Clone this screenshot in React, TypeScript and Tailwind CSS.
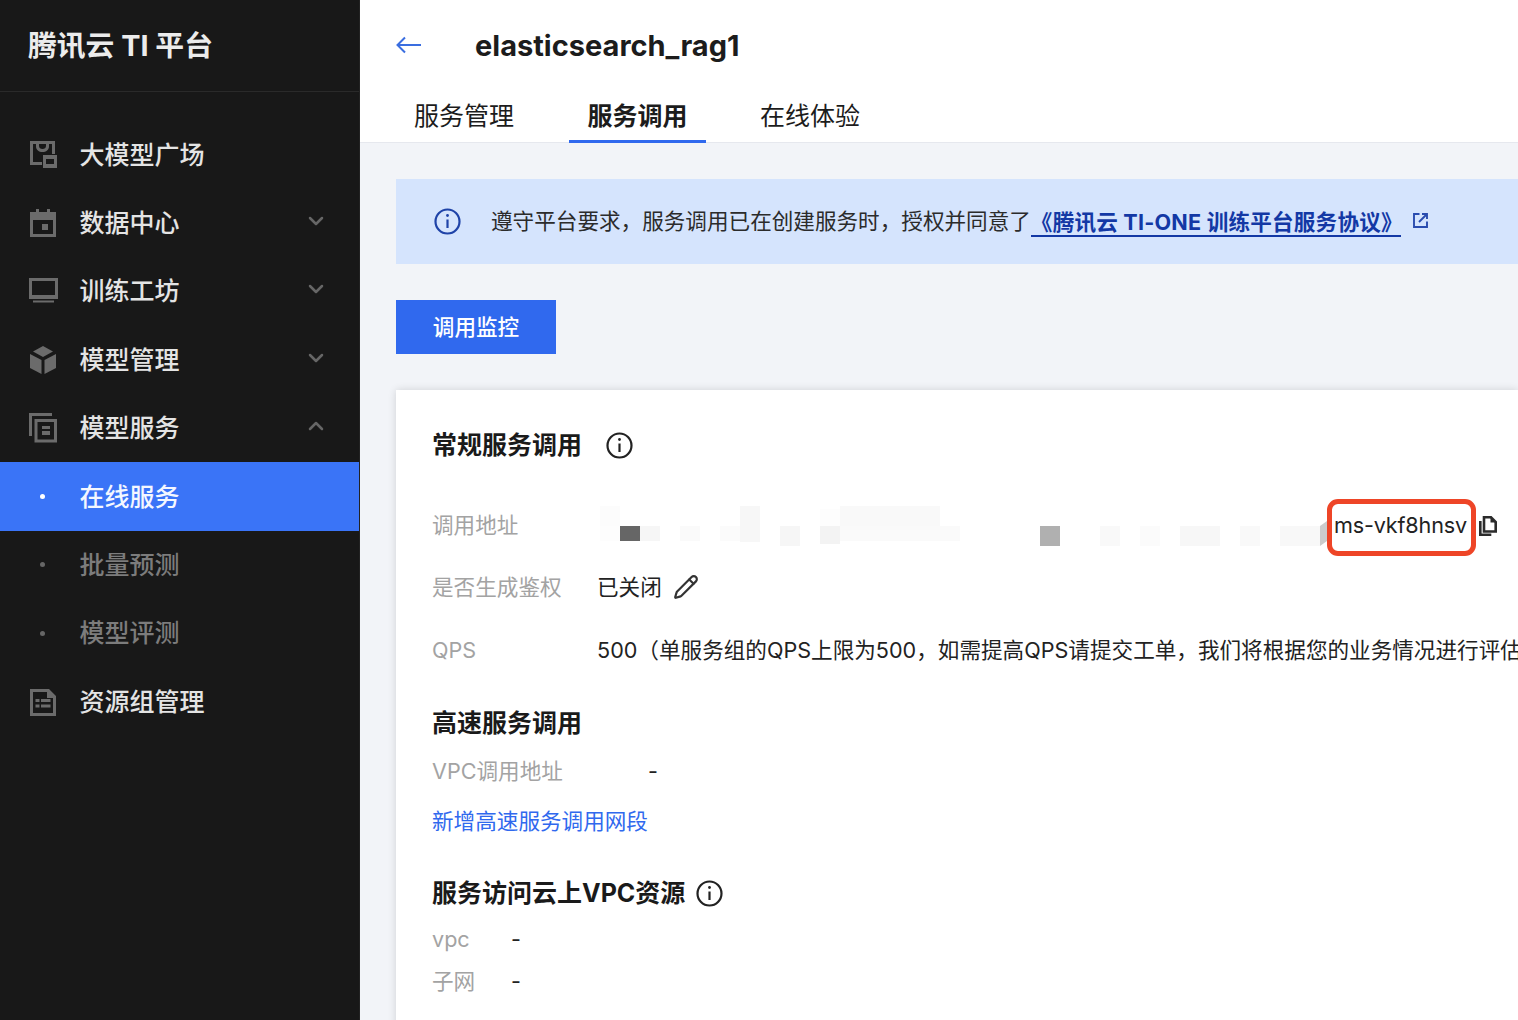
import * as React from "react"
import { ChevronDown, ChevronUp, Pencil } from "lucide-react"

const font = "font-['Inter','Noto_Sans_CJK_SC',sans-serif]"

function MarketIcon() {
  return (
    <svg width="28" height="28" viewBox="0 0 28 28" fill="#6b6b6b">
      <path d="M1 1h25v13h-3V4H4v18h9v3H1z" />
      <path d="M7 4h3v2c0 2 1.500 3 3.500 3s3.500-1 3.500-3V4h3v2.500C20 10 17 12 13.500 12S7 10 7 6.500z" />
      <path fillRule="evenodd" d="M14 15h14v13H14zM17 19v5h8v-5z" />
    </svg>
  )
}

function DataIcon() {
  return (
    <svg width="28" height="28" viewBox="0 0 28 28" fill="#6b6b6b">
      <path fillRule="evenodd" d="M1 3h6V0h3v3h8V0h3v3h6v25H1zM4 11v14h20V11z" />
      <path d="M13 15h6v6h-6z" />
    </svg>
  )
}

function ScreenIcon() {
  return (
    <svg width="30" height="26" viewBox="0 0 30 26" fill="#6b6b6b">
      <path fillRule="evenodd" d="M0 0h29v21H0zM3 3v14h23V3z" />
      <path d="M4 22.500h21v2H4z" />
    </svg>
  )
}

function CubeIcon() {
  return (
    <svg width="28" height="28" viewBox="0 0 28 28" fill="#6b6b6b">
      <path d="M14 0l10 5.500-10 5.500-10-5.500z" />
      <path d="M1 8l11.500 6v14L1 22z" />
      <path d="M27 8l-11.500 6v14L27 22z" />
    </svg>
  )
}

function StackIcon() {
  return (
    <svg width="29" height="30" viewBox="0 0 29 30" fill="#6b6b6b">
      <path d="M0 0h23v3H3v20H0z" />
      <path fillRule="evenodd" d="M5.500 6H28v23.500H5.500zM8.500 9v17.500H25V9z" />
      <path d="M13 13h8v3h-8zM13 18h8v4h-8z" />
    </svg>
  )
}

function DocIcon() {
  return (
    <svg width="28" height="28" viewBox="0 0 28 28" fill="#6b6b6b">
      <path fillRule="evenodd" d="M1 1h19l7 7v20H1zM4 4v21h20V10h-6V4z" />
      <path d="M6.500 11h4v3h-4zM12 11h9.500v3H12zM6.500 16.500h4v3h-4zM12 16.500h9.500v3H12z" />
    </svg>
  )
}

function BackArrow() {
  return (
    <svg width="25" height="18" viewBox="0 0 25 18" fill="none" stroke="#3a6ee0" strokeWidth="2" className="shrink-0 -mt-[3px]">
      <path d="M1.500 9H25" />
      <path d="M9 1.500L1.500 9L9 16.500" />
    </svg>
  )
}

function InfoIcon({ color }: { color: string }) {
  return (
    <svg width="27" height="27" viewBox="0 0 27 27" fill="none" stroke={color} strokeWidth="2.2">
      <circle cx="13.500" cy="13.500" r="12" />
      <path d="M13.500 11.500v8.500" />
      <circle cx="13.500" cy="7.500" r="1.400" fill={color} stroke="none" />
    </svg>
  )
}

function CopyIcon() {
  return (
    <svg width="18" height="20" viewBox="0 0 18 20" fill="none" stroke="#2b2b2b" strokeWidth="2.600" className="shrink-0">
      <path d="M1.300 5v13.700h11" />
      <path d="M5 1.300h7l4.700 4.700v9.500H5z" />
      <path d="M11.500 1.500v5h5z" fill="#2b2b2b" stroke="none" />
    </svg>
  )
}

function ExternalIcon() {
  return (
    <svg width="15" height="15" viewBox="0 0 15 15" fill="none" stroke="#2a4caf" strokeWidth="1.900" className="shrink-0">
      <path d="M6.500 1H1v13h13V8.500" />
      <path d="M6 9l8-8M9 1h5v5" />
    </svg>
  )
}

// blurred-out part of the endpoint address
function Mosaic() {
  return (
    <svg width="729" height="46" viewBox="0 0 729 46" className="shrink-0 -mt-[4px]">
      <rect x="2" y="5" width="20" height="20" fill="#fcfcfc" />
      <rect x="2" y="25" width="20" height="15" fill="#fdfdfd" />
      <rect x="22" y="25" width="20" height="15" fill="#666666" />
      <rect x="42" y="25" width="20" height="15" fill="#f6f6f6" />
      <rect x="82" y="25" width="20" height="15" fill="#fafafa" />
      <rect x="122" y="25" width="20" height="15" fill="#fbfbfb" />
      <rect x="142" y="5" width="20" height="36" fill="#f7f7f7" />
      <rect x="182" y="25" width="20" height="20" fill="#f6f6f6" />
      <rect x="222" y="25" width="20" height="18" fill="#f3f3f3" />
      <rect x="222" y="8" width="20" height="17" fill="#fdfdfd" />
      <rect x="242" y="5" width="100" height="20" fill="#f9f9f9" />
      <rect x="242" y="25" width="120" height="15" fill="#fafafa" />
      <rect x="442" y="25" width="20" height="20" fill="#b0b0b0" />
      <rect x="502" y="25" width="20" height="20" fill="#f9f9f9" />
      <rect x="542" y="25" width="20" height="20" fill="#fbfbfb" />
      <rect x="582" y="25" width="40" height="20" fill="#f7f7f7" />
      <rect x="642" y="25" width="20" height="20" fill="#f9f9f9" />
      <rect x="682" y="25" width="40" height="20" fill="#f8f8f8" />
      <path d="M722 25l7-5v20l-7 5z" fill="#cccccc" />
    </svg>
  )
}

type NavItem = {
  label: string
  icon?: React.ReactNode
  chevron?: "down" | "up"
  active?: boolean
  sub?: boolean
}

const navItems: NavItem[] = [
  { label: "大模型广场", icon: <MarketIcon /> },
  { label: "数据中心", icon: <DataIcon />, chevron: "down" },
  { label: "训练工坊", icon: <ScreenIcon />, chevron: "down" },
  { label: "模型管理", icon: <CubeIcon />, chevron: "down" },
  { label: "模型服务", icon: <StackIcon />, chevron: "up" },
  { label: "在线服务", sub: true, active: true },
  { label: "批量预测", sub: true },
  { label: "模型评测", sub: true },
  { label: "资源组管理", icon: <DocIcon /> },
]

function Sidebar() {
  return (
    <aside className="w-[360px] h-full shrink-0 bg-[#181818] border-r border-[#222222]">
      <div className="h-[92px] flex items-center pl-[28px] border-b border-[#2a2a2a] text-[28.8px] font-bold text-[#ececec] whitespace-pre">
        腾讯云 TI 平台
      </div>
      <nav className="pt-[28.2px]">
        {navItems.map((item) => (
          <div
            key={item.label}
            className={`h-[68.4px] flex items-center text-[25px] font-medium whitespace-nowrap ${
              item.active ? "bg-[#3a74f7] text-[#f4f7ff]" : item.sub ? "text-[#7c7c7c]" : "text-[#e4e4e4]"
            }`}
          >
            <div className="w-[79.5px] pl-[29px] shrink-0 flex items-center">
              {item.icon}
              {item.sub && (
                <span className={`ml-[11px] w-[5px] h-[5px] rounded-full ${item.active ? "bg-white" : "bg-[#666666]"}`} />
              )}
            </div>
            <span className="flex-1 pt-[2px]">{item.label}</span>
            {item.chevron === "down" && <ChevronDown size={24} strokeWidth={2.5} color="#666666" className="mr-[31px] -mt-[4px]" />}
            {item.chevron === "up" && <ChevronUp size={24} strokeWidth={2.5} color="#666666" className="mr-[31px] -mt-[4px]" />}
          </div>
        ))}
      </nav>
    </aside>
  )
}

function Header() {
  return (
    <header className="h-[143px] shrink-0 bg-white border-b border-[#e6e8ee]">
      <div className="h-[92px] flex items-center pl-[36px]">
        <BackArrow />
        <h1 className="ml-[54px] text-[29px] font-bold text-[#1c1c1c]">elasticsearch_rag1</h1>
      </div>
      <div className="flex h-[51px] pl-[36px] text-[25px] text-[#1c1c1c]">
        <div className="w-[173px] flex justify-center pt-[6px] pr-[37px]">服务管理</div>
        <div className="w-[137px] flex justify-center pt-[6px] font-bold border-b-[3px] border-[#3069ee] h-[51px]">服务调用</div>
        <div className="ml-[54px] pt-[6px]">在线体验</div>
      </div>
    </header>
  )
}

function Banner() {
  return (
    <div className="h-[85px] flex items-center pl-[38px] bg-[#d5e4fd] text-[21.6px] text-[#2b2b2b] whitespace-nowrap">
      <InfoIcon color="#1f43a8" />
      <span className="ml-[30px]">遵守平台要求，服务调用已在创建服务时，授权并同意了</span>
      <span className="font-bold text-[#1338a5] border-b-2 border-[#1338a5] pt-[3px] leading-[25px] w-[370px] tracking-[0.2px]">《腾讯云 TI-ONE 训练平台服务协议》</span>
      <span className="ml-[12px] -mt-[2px]"><ExternalIcon /></span>
    </div>
  )
}

function SectionTitle({ children }: { children: React.ReactNode }) {
  return <div className="text-[25px] font-bold text-[#1a1a1a] whitespace-nowrap pt-[2px]">{children}</div>
}

function ServiceCard() {
  return (
    <div className="mt-[36px] bg-white shadow-[0_0_8px_rgba(0,0,0,0.14)] pl-[36px] pt-[30px] h-[700px] text-[21.6px] whitespace-nowrap text-[#222222]">
      <div className="h-[50px] flex items-center gap-[24px]">
        <SectionTitle>常规服务调用</SectionTitle>
        <InfoIcon color="#222222" />
      </div>
      <div className="mt-[25px] h-[61px] flex items-center">
        <span className="w-[166px] shrink-0 text-[#a3a3a3]">调用地址</span>
        <Mosaic />
        <div className="w-[149px] h-[57px] mt-[4px] shrink-0 flex items-center justify-center rounded-[11px] border-[5px] border-[#ee4527] pb-[4px] pr-[2px] text-[#222222] tracking-[-0.15px]">
          ms-vkf8hnsv
        </div>
        <span className="ml-[3px]"><CopyIcon /></span>
      </div>
      <div className="h-[62px] flex items-center">
        <span className="w-[165px] shrink-0 text-[#a3a3a3]">是否生成鉴权</span>
        <span>已关闭</span>
        <Pencil size={26} strokeWidth={2} color="#333333" className="ml-[11px]" />
      </div>
      <div className="h-[64px] flex items-center">
        <span className="w-[165px] shrink-0 text-[#a3a3a3]">QPS</span>
        <span>500（单服务组的QPS上限为500，如需提高QPS请提交工单，我们将根据您的业务情况进行评估）</span>
      </div>
      <div className="mt-[16px] h-[50px] flex items-center">
        <SectionTitle>高速服务调用</SectionTitle>
      </div>
      <div className="h-[46px] flex items-center">
        <span className="w-[216px] shrink-0 text-[#a3a3a3]">VPC调用地址</span>
        <span>-</span>
      </div>
      <div className="mt-[2px] h-[50px] flex items-center text-[#3069ee]">新增高速服务调用网段</div>
      <div className="mt-[22px] h-[50px] flex items-center gap-[11px]">
        <SectionTitle>服务访问云上VPC资源</SectionTitle>
        <InfoIcon color="#222222" />
      </div>
      <div className="h-[42px] flex items-center">
        <span className="w-[79px] shrink-0 text-[#a3a3a3]">vpc</span>
        <span>-</span>
      </div>
      <div className="h-[42px] flex items-center">
        <span className="w-[79px] shrink-0 text-[#a3a3a3]">子网</span>
        <span>-</span>
      </div>
    </div>
  )
}

export default function App() {
  return (
    <div className={`w-[1518px] h-[1020px] flex overflow-hidden ${font}`}>
      <Sidebar />
      <main className="flex-1 min-w-0 flex flex-col bg-[#f2f4f8]">
        <Header />
        <div className="pl-[36px] pt-[36px]">
          <Banner />
          <button className="mt-[36px] w-[160px] h-[54px] bg-[#3069ee] text-white text-[21.6px] font-medium block">调用监控</button>
          <ServiceCard />
        </div>
      </main>
    </div>
  )
}
